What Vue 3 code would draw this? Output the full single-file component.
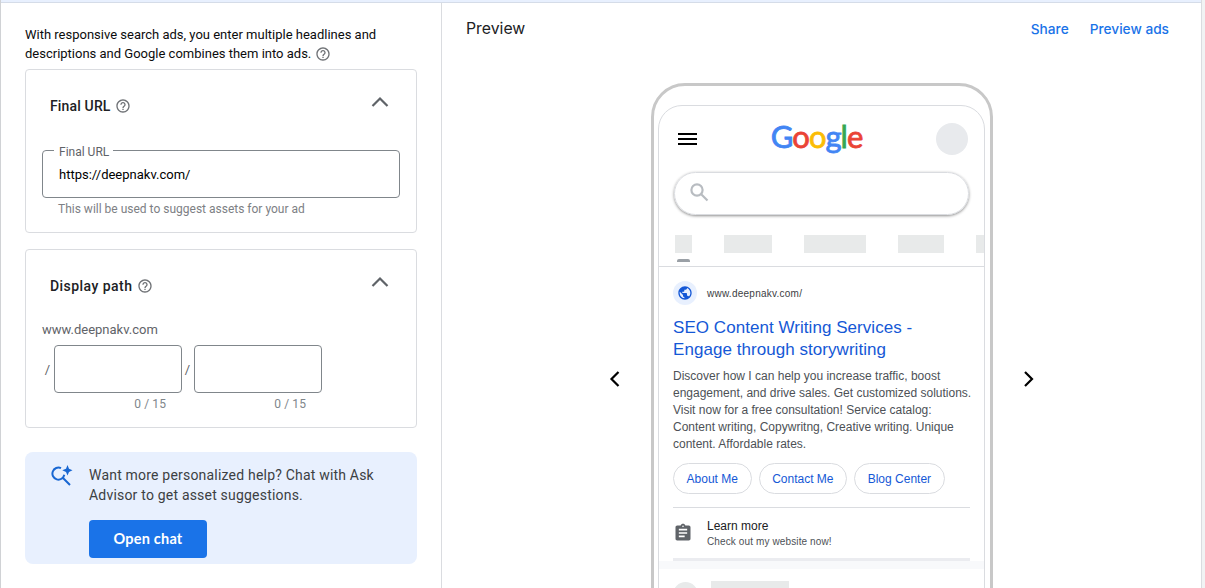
<script setup>
import { ref } from "vue";

const finalUrl = ref("https://deepnakv.com/");
const paths = ref(["", ""]);

const letters = [
  { char: "G", color: "blue" },
  { char: "o", color: "red" },
  { char: "o", color: "yellow" },
  { char: "g", color: "blue" },
  { char: "l", color: "green" },
  { char: "e", color: "red" },
];

const sitelinks = ["About Me", "Contact Me", "Blog Center"];
</script>

<template>
  <div class="page">
    <div class="editor">
      <p class="intro">
        With responsive search ads, you enter multiple headlines and<br />
        <span class="intro-end">descriptions and Google combines them into ads.</span>
        <svg class="help" viewBox="0 0 24 24">
          <path
            d="M11 18h2v-2h-2v2zm1-16C6.48 2 2 6.48 2 12s4.480 10 10 10 10-4.480 10-10S17.520 2 12 2zm0 18c-4.410 0-8-3.590-8-8s3.590-8 8-8 8 3.590 8 8-3.590 8-8 8zm0-14c-2.210 0-4 1.790-4 4h2c0-1.100.9-2 2-2s2 .9 2 2c0 2-3 1.750-3 5h2c0-2.250 3-2.500 3-5 0-2.210-1.790-4-4-4z"
          />
        </svg>
      </p>

      <section class="card url-card">
        <header class="card-header">
          <h2 class="url-heading">Final URL</h2>
          <svg class="help" viewBox="0 0 24 24">
            <path
              d="M11 18h2v-2h-2v2zm1-16C6.48 2 2 6.48 2 12s4.480 10 10 10 10-4.480 10-10S17.520 2 12 2zm0 18c-4.410 0-8-3.590-8-8s3.590-8 8-8 8 3.590 8 8-3.590 8-8 8zm0-14c-2.210 0-4 1.790-4 4h2c0-1.100.9-2 2-2s2 .9 2 2c0 2-3 1.750-3 5h2c0-2.250 3-2.500 3-5 0-2.210-1.790-4-4-4z"
            />
          </svg>
          <svg class="chevron" viewBox="0 0 18 12"><path d="M1.500 10L9 2.500 16.500 10" /></svg>
        </header>
        <div class="url-field">
          <label for="final-url">Final URL</label>
          <input id="final-url" v-model="finalUrl" type="text" />
        </div>
        <p class="hint">This will be used to suggest assets for your ad</p>
      </section>

      <section class="card path-card">
        <header class="card-header">
          <h2>Display path</h2>
          <svg class="help" viewBox="0 0 24 24">
            <path
              d="M11 18h2v-2h-2v2zm1-16C6.48 2 2 6.48 2 12s4.480 10 10 10 10-4.480 10-10S17.520 2 12 2zm0 18c-4.410 0-8-3.590-8-8s3.590-8 8-8 8 3.590 8 8-3.590 8-8 8zm0-14c-2.210 0-4 1.790-4 4h2c0-1.100.9-2 2-2s2 .9 2 2c0 2-3 1.750-3 5h2c0-2.250 3-2.500 3-5 0-2.210-1.790-4-4-4z"
            />
          </svg>
          <svg class="chevron" viewBox="0 0 18 12"><path d="M1.500 10L9 2.500 16.500 10" /></svg>
        </header>
        <p class="domain">www.deepnakv.com</p>
        <div class="path-row">
          <div v-for="(path, i) in paths" :key="i" class="path-item">
            <span class="slash">/</span>
            <div>
              <input v-model="paths[i]" type="text" maxlength="15" />
              <p class="counter">{{ path.length }} / 15</p>
            </div>
          </div>
        </div>
      </section>

      <section class="advisor">
        <svg class="advisor-icon" viewBox="0 0 22 22">
          <path class="line" d="M10 3.200A6 6 0 1 0 13.300 9.800M11.500 12.500L19 20" />
          <path class="fill" d="M16.500 0L18 3.700L21.500 5.300L18 6.900L16.500 10.500L15 6.900L11.300 5.300L15 3.700Z" />
        </svg>
        <div>
          <p>Want more personalized help? Chat with Ask<br />Advisor to get asset suggestions.</p>
          <button type="button">Open chat</button>
        </div>
      </section>
    </div>

    <div class="preview">
      <header class="preview-header">
        <h1>Preview</h1>
        <a class="share">Share</a>
        <a class="preview-ads">Preview ads</a>
      </header>

      <div class="stage">
        <svg class="arrow" viewBox="0 0 12 18"><path d="M9.500 2l-7 7 7 7" /></svg>
        <div class="phone">
          <div class="screen">
            <div class="top-bar">
              <div class="burger"><i></i><i></i><i></i></div>
              <div class="logo">
                <span v-for="(l, i) in letters" :key="i" :class="l.color">{{ l.char }}</span>
              </div>
              <div class="avatar"></div>
            </div>
            <div class="search">
              <svg viewBox="0 0 19 19">
                <circle cx="7" cy="7" r="5.600" />
                <path d="M11.200 11.200L17.500 17.500" />
              </svg>
            </div>
            <div class="tabs"><i></i><i></i><i></i><i></i><i></i></div>
            <div class="ad">
              <div class="ad-url">
                <span class="favicon">
                  <svg viewBox="0 0 24 24">
                    <path
                      d="M12 2C6.480 2 2 6.480 2 12s4.480 10 10 10 10-4.480 10-10S17.520 2 12 2zm-1 17.930c-3.950-.49-7-3.850-7-7.930 0-.62.080-1.210.21-1.790L9 15v1c0 1.100.9 2 2 2v1.930zm6.900-2.540c-.26-.81-1-1.390-1.900-1.390h-1v-3c0-.55-.45-1-1-1H8v-2h2c.55 0 1-.45 1-1V7h2c1.100 0 2-.9 2-2v-.41c2.930 1.190 5 4.060 5 7.410 0 2.080-.8 3.970-2.100 5.390z"
                    />
                  </svg>
                </span>
                www.deepnakv.com/
              </div>
              <h3>SEO Content Writing Services -<br />Engage through storywriting</h3>
              <p class="description">
                Discover how I can help you increase traffic, boost<br />
                engagement, and drive sales. Get customized solutions.<br />
                Visit now for a free consultation! Service catalog:<br />
                Content writing, Copywritng, Creative writing. Unique<br />
                content. Affordable rates.
              </p>
              <div class="chips">
                <span v-for="link in sitelinks" :key="link">{{ link }}</span>
              </div>
              <div class="learn">
                <svg viewBox="0 0 24 24">
                  <path
                    d="M19 3h-4.180C14.400 1.840 13.300 1 12 1s-2.400.84-2.820 2H5c-1.100 0-2 .9-2 2v14c0 1.100.9 2 2 2h14c1.100 0 2-.9 2-2V5c0-1.100-.9-2-2-2zm-7 0c.55 0 1 .45 1 1s-.45 1-1 1-1-.45-1-1 .45-1 1-1zm2 14H7v-2h7v2zm3-4H7v-2h10v2zm0-4H7V7h10v2z"
                  />
                </svg>
                <div>
                  <strong>Learn more</strong>
                  <small>Check out my website now!</small>
                </div>
              </div>
            </div>
            <div class="gap"></div>
            <div class="skeleton"><b></b><i></i></div>
          </div>
        </div>
        <svg class="arrow" viewBox="0 0 12 18"><path d="M2 2l7 7-7 7" /></svg>
      </div>
    </div>
  </div>
</template>

<style>
body {
  margin: 0;
  background: #f1f3f4;
}
</style>

<style scoped>
* {
  box-sizing: border-box;
}

p,
h1,
h2,
h3 {
  margin: 0;
  font-weight: 400;
}

.page {
  display: flex;
  width: 1202px;
  height: 588px;
  overflow: hidden;
  background: #fff;
  border-left: 1px solid #d0d2d5;
  border-right: 1px solid #dadce0;
  box-shadow: inset 0 2px #e8f0fe, inset 0 3px #d5dce8;
  font-family: Roboto, "Liberation Sans", sans-serif;
}

.editor {
  width: 441px;
  height: 585px;
  margin-top: 3px;
  padding: 22px 24px 0;
  border-right: 1px solid #dadce0;
}

.intro {
  height: 44px;
  color: #0c0c0d;
  font-size: 13px;
  line-height: 19px;
  white-space: nowrap;
}

.help {
  width: 16px;
  height: 16px;
  fill: #6f7276;
}

.intro .help {
  margin-left: 1px;
  vertical-align: -4px;
}

.intro-end {
  margin-right: 3px;
}

.card {
  width: 392px;
  border: 1px solid #dadce0;
  border-radius: 4px;
}

.url-card {
  height: 164px;
}

.path-card {
  height: 179px;
  margin-top: 16px;
}

.card-header {
  display: flex;
  align-items: center;
  height: 36px;
  margin-top: 18px;
  padding: 0 27px 0 24px;
}

.card-header h2 {
  margin-right: 5px;
  color: #202124;
  font-size: 14px;
  font-weight: 500;
  letter-spacing: 0.45px;
}

.card-header .url-heading {
  margin-right: 4px;
  letter-spacing: 0.15px;
}

.chevron {
  width: 18px;
  height: 12px;
  margin: 0 0 9px auto;
  fill: none;
  stroke: #5f6368;
  stroke-width: 2.2;
}

input {
  display: block;
  border: 1px solid #80868b;
  border-radius: 4px;
  outline: none;
  background: transparent;
  font-family: inherit;
}

.url-field {
  position: relative;
  margin: 26px 16px 0;
}

.url-field label {
  position: absolute;
  top: -5px;
  left: 12px;
  padding: 0 4px 0 5px;
  background: #fff;
  color: #5f6368;
  font-size: 12px;
  line-height: 15px;
}

.url-field input {
  width: 358px;
  height: 48px;
  padding: 1px 16px 0;
  color: #000;
  font-size: 13px;
}

.hint {
  margin: 4px 0 0 32px;
  color: #7d8084;
  font-size: 12px;
  line-height: 15px;
}

.domain {
  margin: 17px 0 0 16px;
  color: #5f6368;
  font-size: 13px;
  line-height: 18px;
}

.path-row {
  display: flex;
  padding: 6px 0 0 16px;
}

.path-item {
  display: flex;
}

.slash {
  width: 12px;
  padding: 0 4px 0 0;
  color: #5f6368;
  font-size: 13px;
  line-height: 50px;
  text-align: right;
}

.path-item input {
  width: 128px;
  height: 48px;
  padding: 0 16px;
}

.counter {
  padding: 4px 16px 0 0;
  color: #80868b;
  font-size: 12px;
  line-height: 15px;
  letter-spacing: 0.1px;
  text-align: right;
}

.advisor {
  display: flex;
  width: 392px;
  height: 112px;
  margin-top: 24px;
  padding: 13px 0 0 26px;
  border-radius: 8px;
  background: #e8f0fe;
}

.advisor-icon {
  width: 22px;
  height: 22px;
  margin-right: 16px;
}

.advisor-icon .line {
  fill: none;
  stroke: #1967d2;
  stroke-width: 2;
}

.advisor-icon .fill {
  fill: #1967d2;
}

.advisor p {
  color: #3c4043;
  font-size: 14px;
  line-height: 20px;
  letter-spacing: 0.2px;
  white-space: nowrap;
}

.advisor button {
  display: block;
  width: 118px;
  height: 38px;
  margin-top: 15px;
  padding: 0 0 2px;
  border: 0;
  border-radius: 4px;
  background: #1a73e8;
  color: #fff;
  font: 700 14.5px Lato, sans-serif;
  letter-spacing: 0.2px;
}

.preview {
  flex: 1;
  height: 585px;
  margin-top: 3px;
}

.preview-header {
  display: flex;
  align-items: center;
  height: 80px;
  padding: 0 32px 29px 24px;
  font-family: Inter, sans-serif;
}

.preview-header h1 {
  flex: 1;
  color: #202124;
  font-size: 15.8px;
}

.preview-header a {
  color: #1a73e8;
  font-size: 13.7px;
  font-weight: 500;
}

.share {
  margin-right: 21px;
}

.stage {
  display: flex;
  justify-content: center;
  gap: 30px;
  padding-left: 1px;
}

.arrow {
  width: 12px;
  height: 18px;
  margin-top: 287px;
  fill: none;
  stroke: #000;
  stroke-width: 2.2;
}

.phone {
  width: 342px;
  height: 620px;
  padding: 19px 4px 0;
  border: 3px solid #c8c8c8;
  border-radius: 34px;
}

.screen {
  width: 327px;
  height: 590px;
  overflow: hidden;
  border: 1px solid #dadce0;
  border-radius: 24px;
}

.top-bar {
  display: flex;
  align-items: center;
  justify-content: space-between;
  height: 32px;
  margin: 17px 16px 0 19px;
}

.burger {
  display: grid;
  gap: 3px;
  width: 19px;
}

.burger i {
  height: 2px;
  background: #000;
}

.logo {
  display: flex;
  margin: -6px 0 0;
  font: 400 31px Lato, sans-serif;
  letter-spacing: -1px;
  -webkit-text-stroke: 0.8px currentColor;
}

.logo span {
  -webkit-text-stroke-color: currentColor;
}

.logo .blue {
  color: #4285f4;
}

.logo .red {
  color: #ea4335;
}

.logo .yellow {
  color: #fbbc05;
}

.logo .green {
  color: #34a853;
}

.avatar {
  width: 32px;
  height: 32px;
  border-radius: 50%;
  background: #e8eaed;
}

.search {
  width: 295px;
  height: 43px;
  margin: 17px 0 0 15px;
  padding: 10px 15px;
  border: 1px solid #dadce0;
  border-radius: 22px;
  box-shadow: 0 1px 3px rgba(0, 0, 0, 0.45);
}

.search svg {
  width: 19px;
  height: 19px;
  fill: none;
  stroke: #b8bcc1;
  stroke-width: 2.2;
}

.tabs {
  display: flex;
  gap: 32px;
  height: 32px;
  margin-top: 20px;
  padding-left: 16px;
  border-bottom: 1px solid #dadce0;
}

.tabs i {
  position: relative;
  flex: none;
  width: 17px;
  height: 18px;
  background: #e8eaea;
}

.tabs i:nth-child(2) {
  width: 48px;
}

.tabs i:nth-child(3) {
  width: 62px;
}

.tabs i:nth-child(4) {
  width: 46px;
}

.tabs i:first-child::after {
  content: "";
  position: absolute;
  top: 24px;
  left: 2px;
  width: 13px;
  height: 3px;
  border-radius: 2px 2px 0 0;
  background: #9aa0a6;
}

.ad {
  margin: 0 14px;
  padding-top: 14px;
  border-bottom: 3px solid #ebecf0;
  font-family: "Liberation Sans", sans-serif;
  white-space: nowrap;
}

.ad-url {
  display: flex;
  align-items: center;
  gap: 10px;
  height: 24px;
  color: #3c4043;
  font-size: 10px;
  letter-spacing: 0.25px;
}

.favicon {
  display: flex;
  align-items: center;
  justify-content: center;
  width: 24px;
  height: 24px;
  border-radius: 50%;
  background: #e8f0fe;
}

.favicon svg {
  width: 16px;
  height: 16px;
  fill: #1558d6;
}

.ad h3 {
  margin-top: 12px;
  color: #1558d6;
  font-size: 17px;
  line-height: 22px;
  letter-spacing: 0.05px;
}

.description {
  margin-top: 7px;
  color: #4d5156;
  font-size: 12px;
  line-height: 17px;
}

.chips {
  display: flex;
  gap: 7px;
  margin-top: 10px;
}

.chips span {
  height: 31px;
  padding: 0 12.6px;
  border: 1px solid #dadce0;
  border-radius: 16px;
  color: #1558d6;
  font-size: 12px;
  line-height: 30px;
}

.learn {
  display: flex;
  align-items: center;
  height: 51px;
  margin-top: 13px;
  border-top: 1px solid #dadce0;
}

.learn svg {
  width: 20px;
  height: 20px;
  margin-right: 14px;
  fill: #5f6368;
}

.learn strong,
.learn small {
  display: block;
  color: #202124;
  font-size: 12px;
  font-weight: 400;
  line-height: 16px;
}

.learn strong {
  padding-top: 2px;
}

.learn small {
  color: #4d5156;
  font-size: 10px;
  letter-spacing: 0.12px;
}

.gap {
  height: 8px;
  background: #f8f9fb;
}

.skeleton {
  display: flex;
  gap: 13px;
  padding: 12px 14px;
}

.skeleton b {
  width: 25px;
  height: 25px;
  margin-top: 1px;
  border-radius: 50%;
  background: #e8eaea;
}

.skeleton i {
  width: 78px;
  height: 18px;
  background: #e8eaea;
}
</style>
